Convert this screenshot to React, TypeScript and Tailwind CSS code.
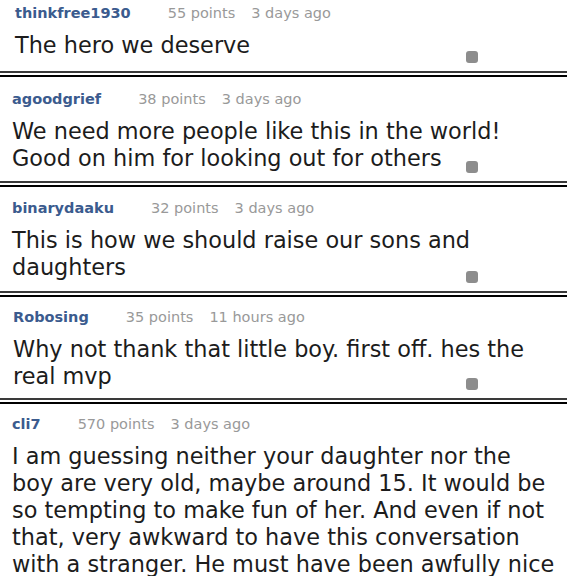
type Comment = {
  user: string;
  points: string;
  age: string;
  lines: string[];
  box: string;
  badge: boolean;
};

const comments: Comment[] = [
  {
    user: "thinkfree1930",
    points: "55 points",
    age: "3 days ago",
    lines: ["The hero we deserve"],
    box: "pl-[15px] pt-[4px] pb-[12px]",
    badge: true,
  },
  {
    user: "agoodgrief",
    points: "38 points",
    age: "3 days ago",
    lines: [
      "We need more people like this in the world!",
      "Good on him for looking out for others",
    ],
    box: "pl-[12px] pt-[13px] pb-[9px]",
    badge: true,
  },
  {
    user: "binarydaaku",
    points: "32 points",
    age: "3 days ago",
    lines: ["This is how we should raise our sons and", "daughters"],
    box: "pl-[12px] pt-[12px] pb-[10px]",
    badge: true,
  },
  {
    user: "Robosing",
    points: "35 points",
    age: "11 hours ago",
    lines: ["Why not thank that little boy. first off. hes the", "real mvp"],
    box: "pl-[13px] pt-[11px] pb-[8px]",
    badge: true,
  },
  {
    user: "cli7",
    points: "570 points",
    age: "3 days ago",
    lines: [
      "I am guessing neither your daughter nor the",
      "boy are very old, maybe around 15. It would be",
      "so tempting to make fun of her. And even if not",
      "that, very awkward to have this conversation",
      "with a stranger. He must have been awfully nice",
    ],
    box: "pl-[12px] pt-[11px] pb-[8px]",
    badge: false,
  },
];

function Separator() {
  return <div className="h-[6px] border-t-2 border-b-2 border-t-[#3a3a3a] border-b-black" />;
}

function CommentBlock({ c }: { c: Comment }) {
  return (
    <div className={`relative ${c.box}`}>
      <div className="flex items-baseline text-[14.5px] leading-[18px]">
        <span className="font-bold text-[#3b5b8e]">{c.user}</span>
        <span className="ml-[37px] text-[#999999]">{c.points}</span>
        <span className="ml-[16px] text-[#999999]">{c.age}</span>
      </div>
      <div className="mt-[10px] text-[22.4px] leading-[27px] text-[#1c1c1c]">
        {c.lines.map((l, i) => (
          <div key={i} className="whitespace-nowrap">
            {l}
          </div>
        ))}
      </div>
      {c.badge && (
        <div className="absolute left-[466px] bottom-[8px] h-[12px] w-[12px] rounded-[3px] bg-[#8d8d8d]" />
      )}
    </div>
  );
}

export default function App() {
  return (
    <div
      className="h-[576px] w-[567px] overflow-hidden bg-white"
      style={{ fontFamily: '"DejaVu Sans", Verdana, sans-serif' }}
    >
      {comments.map((c, i) => (
        <div key={c.user}>
          <CommentBlock c={c} />
          {i < comments.length - 1 && <Separator />}
        </div>
      ))}
    </div>
  );
}
